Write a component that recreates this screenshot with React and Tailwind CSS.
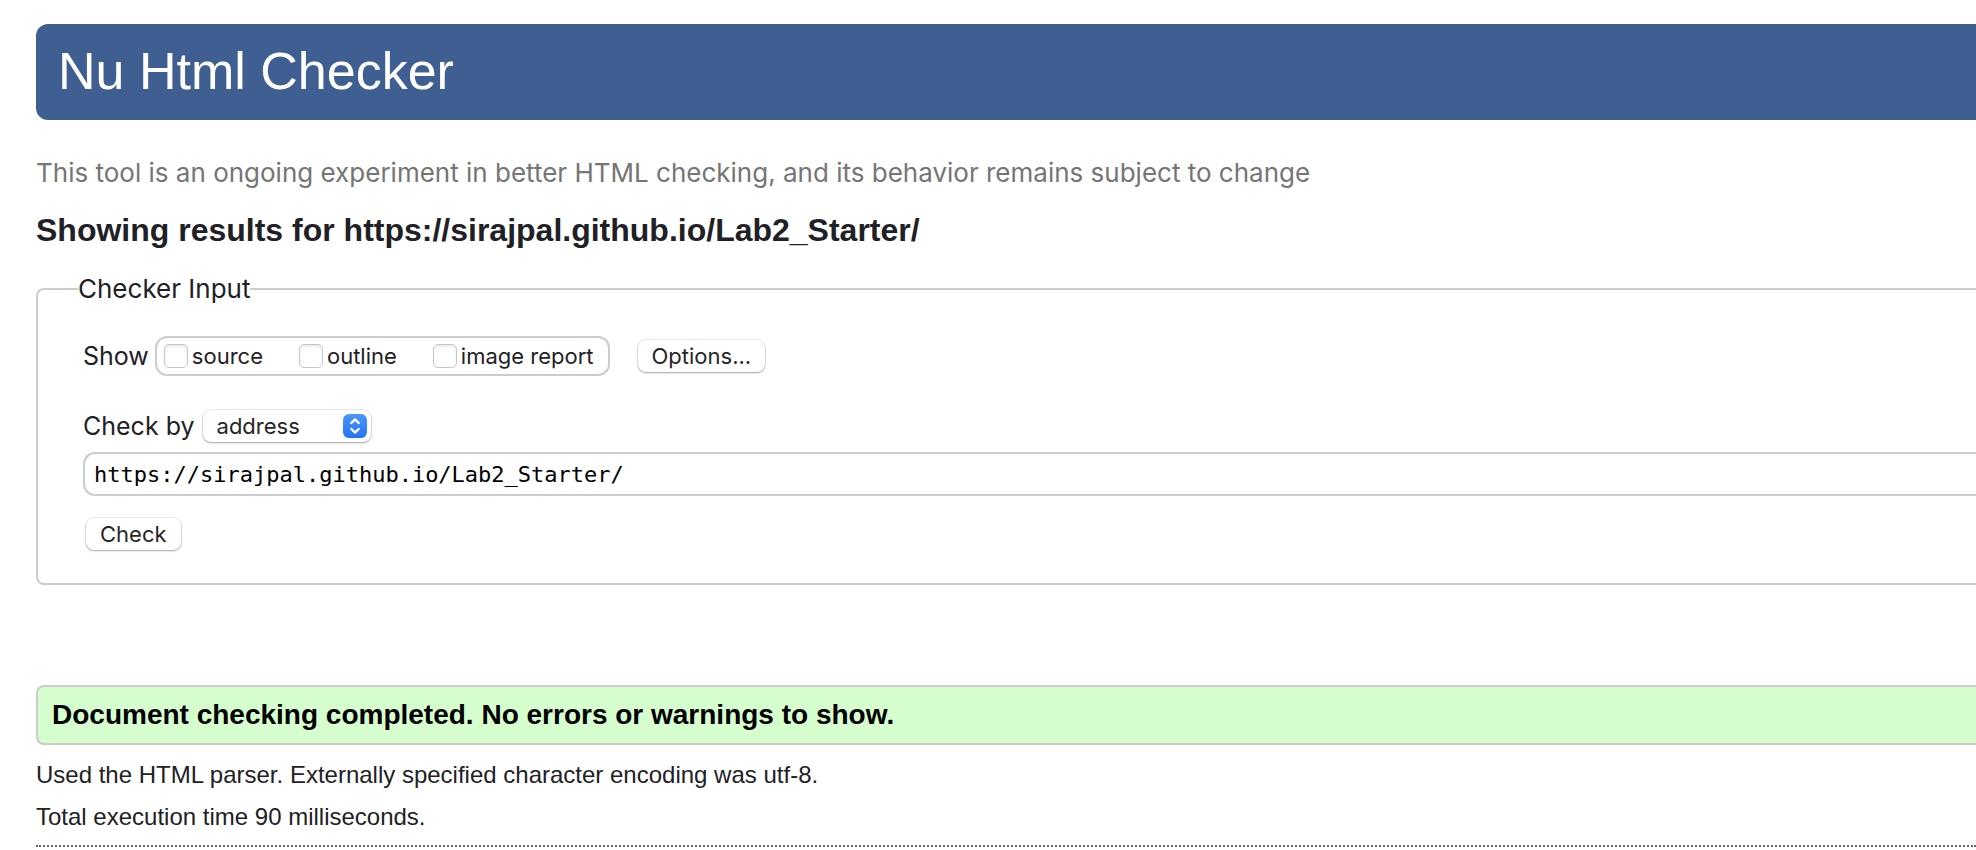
const SHOW = ["source", "outline", "image report"];

const BUTTON =
  "h-8 rounded-lg bg-white px-[14px] text-[22px] leading-8 text-[#262626] shadow-[0_0_0_1px_rgba(0,0,0,0.08),0_1px_2px_rgba(0,0,0,0.3)]";

function ShowOption({ name, id }) {
  return (
    <span className="flex items-center gap-1">
      <input
        id={id}
        type="checkbox"
        className="size-6 appearance-none rounded-[5px] border border-[#c6c6c6] bg-white shadow-[inset_0_2px_3px_rgba(0,0,0,0.08)] checked:bg-[#3b82f6]"
      />
      <label htmlFor={id} className="text-[22px] leading-8">
        {name}
      </label>
    </span>
  );
}

export default function App() {
  return (
    <div className="min-h-screen bg-white pt-6 pl-9 font-['Inter',sans-serif] text-[#1f2126]">
      <header className="rounded-l-xl bg-[#3f5e92] px-[22px] pt-3 pb-[14px]">
        <h1 className="font-['Liberation_Sans',sans-serif] text-[52px] leading-[70px] text-white">
          Nu Html Checker
        </h1>
      </header>

      <p className="mt-9 text-[26px] leading-[34px] text-[#757575]">
        This tool is an ongoing experiment in better HTML checking, and its behavior remains
        subject to change
      </p>

      <h2 className="mt-[18px] font-['Liberation_Sans',sans-serif] text-[32px] leading-[44px] font-bold">
        Showing results for https://sirajpal.github.io/Lab2_Starter/
      </h2>

      <form onSubmit={(e) => e.preventDefault()}>
        <fieldset className="mt-5 rounded-l-lg border-2 border-r-0 border-[#ccc] pt-[30px] pb-[33px] pl-[45px]">
          <legend className="-ml-[5px] text-[26px] leading-[34px]">Checker Input</legend>

          <div className="flex items-center">
            <span className="mr-1.5 text-[25px] leading-8">Show</span>
            <div className="mr-7 flex h-10 items-center gap-9 rounded-xl border-2 border-[#ccc] pr-[14px] pl-[7px]">
              {SHOW.map((name, i) => (
                <ShowOption key={name} name={name} id={"show-" + i} />
              ))}
            </div>
            <button type="button" className={BUTTON}>
              Options...
            </button>
          </div>

          <div className="mt-8 flex items-center">
            <label htmlFor="method" className="mr-2 text-[25px] leading-9">
              Check by
            </label>
            <span className="relative">
              <select
                id="method"
                defaultValue="address"
                className="block h-8 w-[168px] appearance-none rounded-lg bg-white pl-[14px] text-[22px] leading-8 text-[#262626] shadow-[0_0_0_1px_rgba(0,0,0,0.08),0_1px_2px_rgba(0,0,0,0.3)]"
              >
                <option>address</option>
                <option>file upload</option>
                <option>text input</option>
              </select>
              <svg
                viewBox="0 0 24 24"
                className="pointer-events-none absolute top-1 right-1 size-6 rounded-[6px] bg-linear-to-b from-[#4b96f8] to-[#2473f5]"
                fill="none"
                stroke="white"
                strokeWidth="2.4"
                strokeLinecap="round"
                strokeLinejoin="round"
                aria-hidden="true"
              >
                <path d="M8.3 9 12 5.4 15.7 9M8.3 15 12 18.6 15.7 15" />
              </svg>
            </span>
          </div>

          <input
            type="text"
            aria-label="Address"
            defaultValue="https://sirajpal.github.io/Lab2_Starter/"
            className="mt-2 block h-11 w-full rounded-l-xl border-2 border-r-0 border-[#ccc] bg-white px-[9px] font-['DejaVu_Sans_Mono',monospace] text-[22px] text-black"
          />

          <button type="submit" className={"mt-[22px] ml-[3px] block " + BUTTON}>
            Check
          </button>
        </fieldset>
      </form>

      <section className="mt-[100px] font-['Liberation_Sans',sans-serif]">
        <p className="rounded-l-lg border-2 border-r-0 border-[#ccc] bg-[#d5fdce] px-[14px] py-3 text-[28px] leading-8 font-bold text-black">
          Document checking completed. No errors or warnings to show.
        </p>
        <p className="mt-[14px] text-2xl">
          Used the HTML parser. Externally specified character encoding was utf-8.
        </p>
        <p className="mt-[10px] text-2xl">Total execution time 90 milliseconds.</p>
      </section>

      <hr className="mt-3 border-t-2 border-dotted border-[#666]" />
    </div>
  );
}
